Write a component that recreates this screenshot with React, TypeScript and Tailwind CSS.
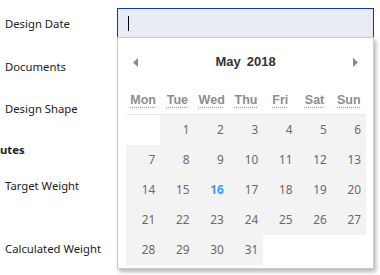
import React from "react";

const days = ["Mon", "Tue", "Wed", "Thu", "Fri", "Sat", "Sun"];

export default function App() {
  const cells: (number | null)[] = [null];
  for (let d = 1; d <= 31; d++) cells.push(d);
  while (cells.length < 35) cells.push(null);

  return (
    <div className="relative w-[380px] h-[275px] bg-white overflow-hidden font-['Noto_Sans',sans-serif] text-[11.3px] text-[#222]">
      <div className="flex flex-col pt-[8px]">
        <div className="flex h-[30px] items-center">
          <div className="w-[117px] pl-[5px] pt-[3px]">Design Date</div>
          <div className="w-[257px] h-[30px] border border-[#0d3a9c] bg-[#e8ecf5] flex items-center">
            <span className="ml-[10px] w-px h-[15px] bg-black" />
          </div>
        </div>
        <div className="mt-[14px] h-[30px] flex items-center pl-[5px]">Documents</div>
        <div className="mt-[12px] h-[30px] flex items-center pl-[5px]">Design Shape</div>
        <div className="mt-[11px] h-[30px] flex items-center font-bold">utes</div>
        <div className="mt-[6px] h-[30px] flex items-center pl-[5px]">Target Weight</div>
        <div className="mt-[33px] h-[30px] flex items-center pl-[5px]">Calculated Weight</div>
      </div>

      <div className="absolute left-[117px] top-[37px] w-[257px] h-[232px] border border-[#c9c9c9] bg-white shadow-[2px_3px_4px_rgba(0,0,0,0.28)]">
        <div className="pt-[13px] h-[35px] px-[15px] flex items-center justify-between">
          <svg width="5" height="9" viewBox="0 0 5 9">
            <polygon points="5,0 5,9 0,4.5" fill="#8a8a8a" />
          </svg>
          <div className="font-['Liberation_Sans',sans-serif] font-bold text-[13px] text-[#333] flex gap-[6px]">
            <span>May</span>
            <span>2018</span>
          </div>
          <svg width="5" height="9" viewBox="0 0 5 9">
            <polygon points="0,0 0,9 5,4.5" fill="#8a8a8a" />
          </svg>
        </div>
        <div className="mx-[8px] w-[240px]">
          <div className="mt-[13px] h-[29px] grid grid-cols-7 border-b border-[#e8e8e8]">
            {days.map((d) => (
              <div key={d} className="flex items-center justify-center">
                <span className="font-['Liberation_Sans',sans-serif] font-bold text-[12.5px] text-[#8e8e8e] underline decoration-dotted decoration-[#9a9a9a] underline-offset-[3px]">
                  {d}
                </span>
              </div>
            ))}
          </div>
          <div className="grid grid-cols-7">
            {cells.map((c, i) => (
              <div
                key={i}
                className={
                  "h-[30px] flex items-center justify-end pr-[5px] text-[11.8px] " +
                  (c === null ? "bg-white" : "bg-[#f3f3f3]") +
                  (c === 16 ? " text-[#3a9af5] font-bold" : " text-[#6a6a6a]")
                }
              >
                {c ?? ""}
              </div>
            ))}
          </div>
        </div>
      </div>
    </div>
  );
}
